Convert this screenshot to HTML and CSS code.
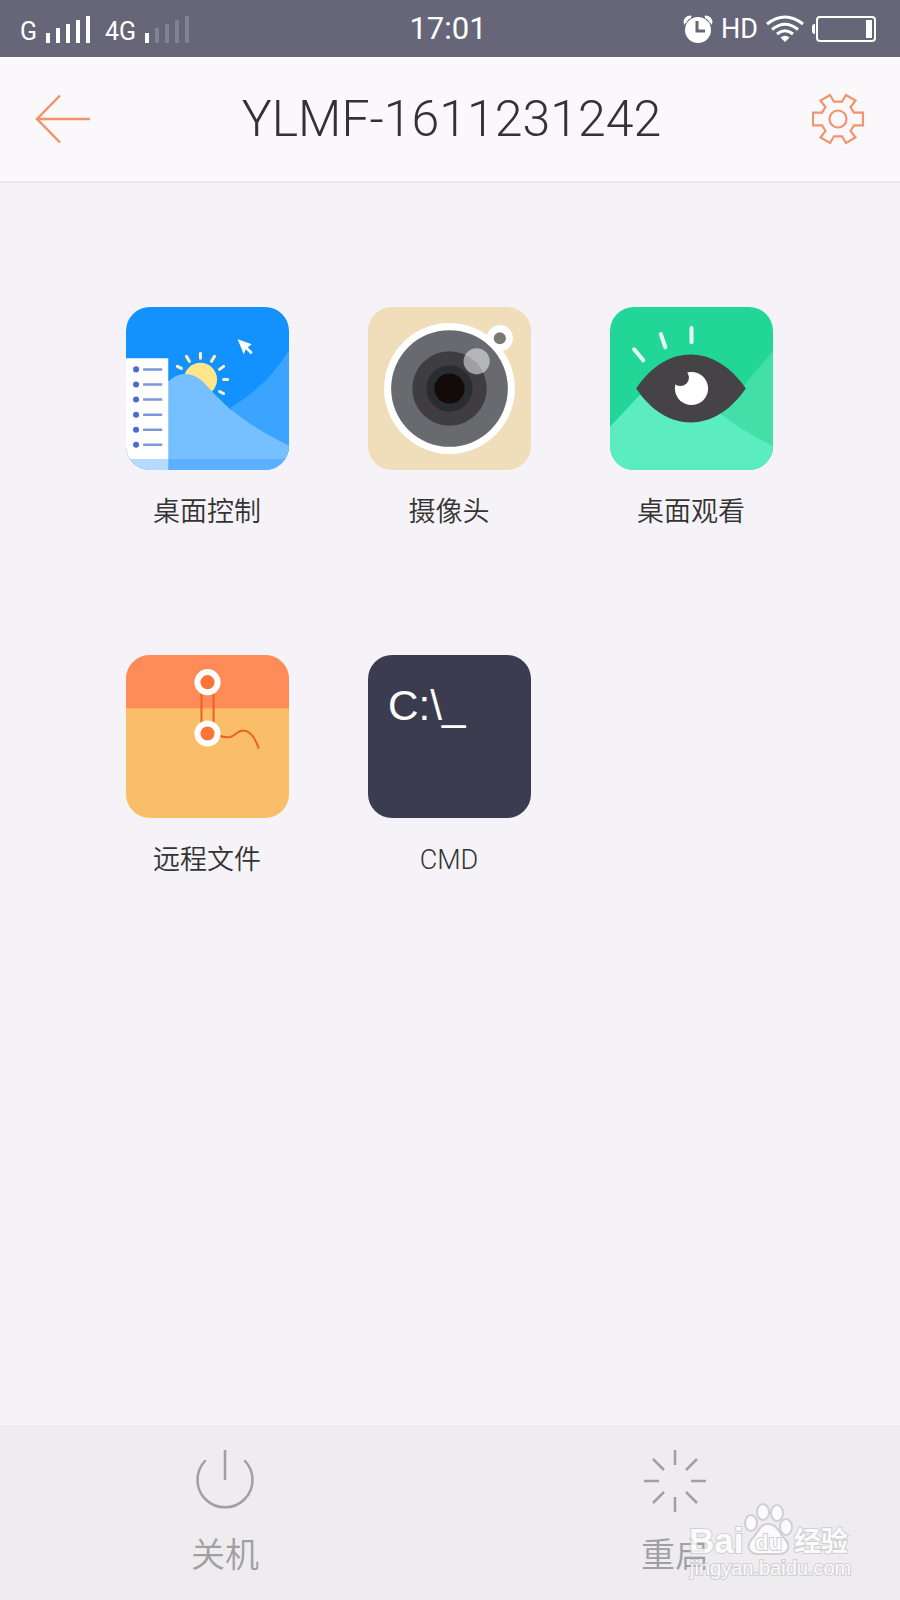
FILE: index.html
```html
<!DOCTYPE html>
<html lang="zh-CN">
<head>
  <meta charset="UTF-8" />
  <meta name="viewport" content="width=device-width, initial-scale=1.0" />
  <title>YLMF-1611231242</title>
  <link rel="stylesheet" href="styles.css">
</head>
<body>
  <div class="status-bar">
    <div class="status-left">
      <span class="network">G</span>
      <svg class="signal" width="46" height="28" viewBox="0 0 46 28" fill="#fff">
        <path d="M0 18h4v10H0zM10 13h4v15h-4zM20 9h4v19h-4zM30 5h4v23h-4zM40 1h4v27h-4z" />
      </svg>
      <span class="network">4G</span>
      <svg class="signal" width="46" height="28" viewBox="0 0 46 28" fill="#fff">
        <path d="M0 18h4v10H0z" />
        <path fill="#838293" d="M10 13h4v15h-4zM20 9h4v19h-4zM30 5h4v23h-4zM40 1h4v27h-4z" />
      </svg>
    </div>
    <time class="clock">17:01</time>
    <div class="status-right">
      <svg width="30" height="28" viewBox="0 0 30 28">
        <circle cx="15" cy="15" r="13" fill="#fff" />
        <path d="M1 10A8 8 0 0 1 9 1L6 4zM29 10A8 8 0 0 0 21 1L24 4z" fill="#fff" />
        <path d="M2 8Q2 2 8 2M28 8Q28 2 22 2" fill="none" stroke="#fff" stroke-width="3" />
        <path d="M14 6v10h8" fill="none" stroke="#666678" stroke-width="3" />
      </svg>
      <span class="hd">HD</span>
      <svg width="38" height="28" viewBox="0 0 38 28" fill="none" stroke="#fff" stroke-width="3">
        <path d="M1 9Q19-5 37 9M6 14.500Q19 4 32 14.500M11 19Q19 12.500 27 19" />
        <path d="M14.500 22.500Q19 19 23.500 22.500L19 27z" fill="#fff" stroke="none" />
      </svg>
      <svg class="battery" width="64" height="26" viewBox="0 0 64 26">
        <path d="M3 8v10Q0 18 0 15v-4Q0 8 3 8z" fill="#fff" />
        <rect x="5" y="1" width="58" height="24" rx="3" fill="none" stroke="#fff" stroke-width="2" />
        <path d="M54 4h6v18h-6z" fill="#fff" />
      </svg>
    </div>
  </div>

  <header>
    <button class="icon-btn" aria-label="返回">
      <svg width="56" height="50" viewBox="0 0 56 50" fill="none" stroke="#f0946b" stroke-width="2.500">
        <path d="M25 1.500L2 25l23 23.500M2 25h53" />
      </svg>
    </button>
    <h1>YLMF-1611231242</h1>
    <button class="icon-btn" aria-label="设置">
      <svg width="52" height="52" viewBox="0 0 52 52" fill="none" stroke="#f0946b" stroke-width="2.200">
        <path d="M51 19.700v12.600h-9l-3.500 5.700 5 6.500L34 50l-4-6.700h-8L18 50l-9.500-5.500 5-6.500-3.500-5.700H1V19.700h9l3.500-5.700-5-6.500L18 2l4 6.700h8L34 2l9.500 5.500-5 6.500 3.500 5.700z" />
        <circle cx="26" cy="26" r="8.500" />
      </svg>
    </button>
  </header>

  <main class="apps">
    <button class="app">
      <svg class="tile" viewBox="0 0 162 162">
        <rect width="162" height="162" fill="#1392ff" />
        <path d="M162 43Q138 81 104 100L120 145H162z" fill="#3ba4ff" />
        <g stroke="#fff2b8" stroke-width="3" stroke-linecap="round">
          <path d="M74 46v5M60 49l3 5M88 49l-3 5M51 59l4 2M97 59l-4 3M97 72h4M93 84l4 2" />
        </g>
        <circle cx="74" cy="72" r="16.500" fill="#ffe68a" />
        <path d="M41 75C54 62 69 65 80 78C105 106 124 118 162 138V162H41z" fill="#77c0ff" />
        <path d="M41 151H162V162H41z" fill="#5bb0ff" />
        <path d="M0 51h42v100H0z" fill="#fff" />
        <path d="M0 151h42v11H0z" fill="#b5dcff" />
        <g fill="#4a6bd4">
          <circle cx="10" cy="62" r="3" />
          <circle cx="10" cy="77" r="3" />
          <circle cx="10" cy="92" r="3" />
          <circle cx="10" cy="107" r="3" />
          <circle cx="10" cy="122" r="3" />
          <circle cx="10" cy="137" r="3" />
        </g>
        <path d="M17 62h19M17 77h19M17 92h19M17 107h19M17 122h19M17 137h19" stroke="#7d97dc" stroke-width="2.500" />
        <path d="M111 32l14 5-4 3 5 5-2 2-5-5-2 5z" fill="#fff" />
      </svg>
      <span class="label">桌面控制</span>
    </button>

    <button class="app">
      <svg class="tile" viewBox="0 0 162 162">
        <rect width="162" height="162" fill="#f0debb" />
        <circle cx="131" cy="31" r="13" fill="#fff" />
        <path d="M113 29l20 18-7 12-20-14z" fill="#fff" />
        <circle cx="81" cy="81" r="65" fill="#fff" />
        <circle cx="81" cy="81" r="58" fill="#696a70" />
        <circle cx="81" cy="81" r="37" fill="#3f3d40" />
        <circle cx="81" cy="81" r="23" fill="#292d32" />
        <circle cx="81" cy="81" r="15" fill="#130b09" />
        <circle cx="108" cy="54" r="13" fill="#fff" fill-opacity="0.5" />
        <circle cx="131" cy="31" r="6" fill="#7b7775" />
      </svg>
      <span class="label">摄像头</span>
    </button>

    <button class="app">
      <svg class="tile" viewBox="0 0 162 162">
        <rect width="162" height="162" fill="#22d698" />
        <path d="M162 44Q146 62 134 77L100 115L162 150z" fill="#42dfa8" />
        <path d="M0 119L30 87L100 98Q126 121 162 138V162H0z" fill="#5becc0" />
        <path d="M26 81C56 36 104 36 135 81C104 126 56 126 26 81z" fill="#464347" />
        <circle cx="81" cy="81" r="16.500" fill="#fff" />
        <circle cx="70" cy="70" r="8.500" fill="#464347" />
        <path d="M81 21v14M50.500 27l4.500 13M24 42l9 11" stroke="#e6fff6" stroke-width="4" stroke-linecap="round" />
      </svg>
      <span class="label">桌面观看</span>
    </button>

    <button class="app">
      <svg class="tile" viewBox="0 0 162 162">
        <rect width="162" height="162" fill="#fabe69" />
        <rect width="162" height="53" fill="#ff8b58" />
        <path d="M75 36v34M87 36v34M92 80C109 86 108 75 116 75C124 75 129 84 132 93" fill="none" stroke="#e9641f" stroke-width="2" />
        <circle cx="81" cy="27" r="10" fill="#fd7439" stroke="#fff" stroke-width="6" />
        <circle cx="81" cy="78" r="10" fill="#fd7439" stroke="#fff" stroke-width="6" />
      </svg>
      <span class="label">远程文件</span>
    </button>

    <button class="app">
      <svg class="tile" viewBox="0 0 162 162">
        <rect width="162" height="162" fill="#3b3c4f" />
        <text class="prompt" x="20" y="65">C:\_</text>
      </svg>
      <span class="label">CMD</span>
    </button>
  </main>

  <footer>
    <button class="action">
      <svg width="64" height="64" viewBox="0 0 64 64" fill="none" stroke="#a09fa2" stroke-width="2.500">
        <path d="M32 1v30" />
        <path d="M12 12A27.500 27.500 0 1 0 52 12" stroke-linecap="round" />
      </svg>
      <span>关机</span>
    </button>
    <button class="action">
      <svg width="64" height="64" viewBox="0 0 64 64" fill="none" stroke="#a09fa2" stroke-width="2.500">
        <path d="M32 1v15M32 48v15M1 32h15M48 32h15M10 10l11 11M43 43l11 11M54 10L43 21M21 43L10 54" />
      </svg>
      <span>重启</span>
    </button>
    <svg class="watermark" width="166" height="84" viewBox="0 0 166 84">
      <g fill="#fff" stroke="#c9c8cb" stroke-width="2">
        <text class="brand" x="1" y="53">Bai</text>
        <ellipse cx="63" cy="23" rx="6" ry="8" />
        <ellipse cx="75" cy="12" rx="6" ry="8" />
        <ellipse cx="89" cy="13" rx="6" ry="8" />
        <ellipse cx="98" cy="27" rx="6" ry="8" />
        <path d="M80 24C90 24 91 34 97 39C104 47 99 54 91 54H70C62 54 57 47 64 39C70 34 71 24 80 24z" />
        <text class="brand-du" x="67" y="50">du</text>
        <text class="brand-cn" x="106" y="51">经验</text>
        <text class="site" x="2" y="75">jingyan.baidu.com</text>
      </g>
    </svg>
  </footer>
</body>
</html>
```

FILE: styles.css
```css
* {
  box-sizing: border-box;
}
body {
  margin: 0;
  min-height: 100vh;
  display: flex;
  flex-direction: column;
  font-family: Roboto, "Noto Sans CJK SC", sans-serif;
  font-weight: 300;
  background-color: #f5f3f7;
  color: #333;
}
button {
  border: none;
  padding: 0;
  background: none;
  font: inherit;
  color: inherit;
  cursor: pointer;
}
svg {
  display: block;
}
.status-bar {
  display: grid;
  grid-template-columns: 1fr auto 1fr;
  align-items: center;
  height: 57px;
  padding: 0 24px 0 20px;
  background: #666678;
  color: #fff;
  font-weight: 400;
}
.status-left, .status-right {
  display: flex;
  align-items: center;
}
.status-left {
  gap: 9px;
}
.status-right {
  justify-content: flex-end;
  gap: 8px;
}
.network {
  font-size: 25px;
  line-height: 28px;
  padding-top: 6px;
}
.signal {
  margin-right: 4px;
}
.clock {
  font-size: 31px;
}
.hd {
  font-size: 27px;
}
header {
  display: flex;
  align-items: center;
  justify-content: space-between;
  height: 126px;
  padding: 0 36px 0 35px;
  background: #faf8fb;
  border-bottom: 2px solid #ebe9ec;
}
h1 {
  margin: 0;
  font-size: 50px;
  font-weight: 300;
}
.apps {
  flex: 1;
  display: grid;
  grid-template-columns: repeat(3, 1fr);
  align-content: start;
  row-gap: 123px;
  padding: 124px 88px 124px 86px;
}
.app {
  display: flex;
  flex-direction: column;
  align-items: center;
  gap: 22px;
}
.tile {
  width: 163px;
  height: 163px;
  border-radius: 24px;
}
.label {
  font-size: 27px;
  font-weight: 350;
  line-height: 40px;
}
.prompt {
  font-family: "Liberation Sans", sans-serif;
  font-size: 42px;
  fill: #fff;
}
footer {
  position: relative;
  display: flex;
  height: 175px;
  background: #eeecef;
  color: #a09fa2;
}
.action {
  flex: 1;
  display: flex;
  flex-direction: column;
  align-items: center;
  gap: 18px;
  padding-top: 24px;
  font-size: 34px;
  font-weight: 350;
  line-height: 48px;
}
/* logo lies over the bottom bar */
.watermark {
  position: absolute;
  right: 46px;
  bottom: 16px;
  opacity: 0.8;
  font-family: "Liberation Sans", "Noto Sans CJK SC", sans-serif;
  pointer-events: none;
}
.watermark text {
  paint-order: stroke;
}
.brand {
  font-size: 35px;
  font-weight: bold;
}
.brand-du {
  font-size: 22px;
  font-weight: bold;
}
.brand-cn {
  font-size: 27px;
  font-weight: bold;
}
.site {
  font-size: 20px;
  font-weight: 400;
}
```
